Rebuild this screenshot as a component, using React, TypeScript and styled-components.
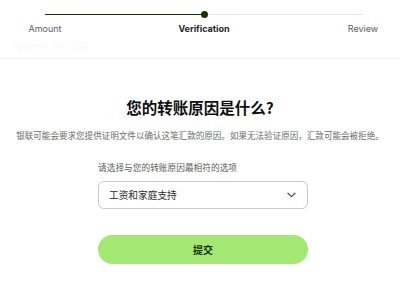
import React from "react";
import styled, { createGlobalStyle } from "styled-components";

const Global = createGlobalStyle`
  html, body { margin: 0; padding: 0; background: #ffffff; }
  body { font-family: "Inter", "Noto Sans CJK SC", sans-serif; width: 400px; }
  * { box-sizing: border-box; }
`;

const Header = styled.header`
  padding-top: 11px;
  border-bottom: 1px solid #efefef;
  height: 59px;
`;

const Track = styled.div`
  position: relative;
  margin: 0 37px 0 45px;
  height: 7px;
  display: flex;
  align-items: center;
`;

const TrackDone = styled.div<{ $w: number }>`
  height: 1.5px;
  background: #163300;
  width: ${(p) => p.$w}px;
`;

const TrackTodo = styled.div`
  height: 1px;
  background: #e6e6e6;
  flex: 1;
`;

const Dot = styled.span`
  width: 7px;
  height: 7px;
  border-radius: 50%;
  background: #163300;
  margin: 0 -3.5px;
  position: relative;
  z-index: 1;
`;

const Steps = styled.div`
  margin: 5px 37px 0 45px;
  display: flex;
  justify-content: space-between;
`;

const Step = styled.div`
  width: 0;
  display: flex;
  justify-content: center;
`;

const StepLabel = styled.span<{ $active?: boolean }>`
  white-space: nowrap;
  font-size: 9px;
  line-height: 12px;
  font-weight: ${(p) => (p.$active ? 700 : 400)};
  color: ${(p) => (p.$active ? "#1e1e1e" : "#5d5d5d")};
`;

const Faint = styled.div`
  margin: 5px 0 0 12px;
  font-size: 9px;
  line-height: 12px;
  color: #f8f8f8;
`;

const Main = styled.main`
  display: flex;
  flex-direction: column;
  align-items: center;
  padding-top: 37px;
`;

const Title = styled.h1`
  margin: 0;
  font-family: "Noto Sans CJK SC", sans-serif;
  font-size: 15.5px;
  line-height: 22px;
  font-weight: 700;
  color: #0e0f0c;
`;

const Subtitle = styled.p`
  margin: 11px 0 0;
  font-family: "Noto Sans CJK SC", sans-serif;
  font-size: 8.55px;
  line-height: 12px;
  color: #6a6c6a;
  white-space: nowrap;
`;

const Form = styled.form`
  align-self: flex-start;
  margin-left: 98px;
  width: 210px;
  display: flex;
  flex-direction: column;
`;

const Label = styled.label`
  margin-top: 21px;
  font-family: "Noto Sans CJK SC", sans-serif;
  font-size: 8.7px;
  line-height: 12px;
  color: #5a5a5a;
`;

const Select = styled.div`
  margin-top: 7px;
  height: 28px;
  border: 1px solid #c9c9c9;
  border-radius: 6px;
  display: flex;
  align-items: center;
  justify-content: space-between;
  padding: 0 11px 0 10px;
`;

const SelectValue = styled.span`
  font-family: "Noto Sans CJK SC", sans-serif;
  font-size: 9.7px;
  color: #2a2a2a;
`;

const Button = styled.button`
  margin-top: 26px;
  height: 29px;
  border: none;
  border-radius: 15px;
  background: #a2e873;
  font-family: "Noto Sans CJK SC", sans-serif;
  font-size: 10px;
  font-weight: 700;
  color: #163300;
  cursor: pointer;
`;

const Chevron = () => (
  <svg width="9" height="6" viewBox="0 0 9 6" fill="none">
    <path d="M1 1.2 L4.5 4.6 L8 1.2" stroke="#3f5a30" strokeWidth="1.2" strokeLinecap="round" strokeLinejoin="round" />
  </svg>
);

export default function App() {
  return (
    <>
      <Global />
      <Header>
        <Track>
          <TrackDone $w={159} />
          <Dot />
          <TrackTodo />
        </Track>
        <Steps>
          <Step>
            <StepLabel>Amount</StepLabel>
          </Step>
          <Step>
            <StepLabel $active>Verification</StepLabel>
          </Step>
          <Step>
            <StepLabel>Review</StepLabel>
          </Step>
        </Steps>
        <Faint>Payment 100 USD</Faint>
      </Header>
      <Main>
        <Title>您的转账原因是什么?</Title>
        <Subtitle>银联可能会要求您提供证明文件以确认这笔汇款的原因。如果无法验证原因，汇款可能会被拒绝。</Subtitle>
        <Form onSubmit={(e) => e.preventDefault()}>
          <Label>请选择与您的转账原因最相符的选项</Label>
          <Select>
            <SelectValue>工资和家庭支持</SelectValue>
            <Chevron />
          </Select>
          <Button type="submit">提交</Button>
        </Form>
      </Main>
    </>
  );
}
